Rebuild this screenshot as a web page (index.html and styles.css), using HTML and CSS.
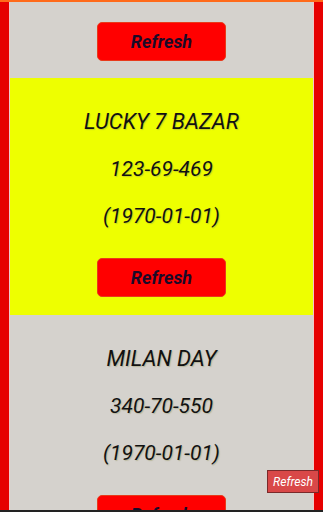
FILE: index.html
```html
<!DOCTYPE html>
<html lang="en">

<head>
    <meta charset="UTF-8">
    <meta name="viewport" content="width=device-width, initial-scale=1.0">
    <title>Results</title>
    <link rel="stylesheet" href="styles.css">
</head>

<body>
    <div class="topline"></div>
    <div class="frame">
        <div class="card grey first">
            <button class="refresh">Refresh</button>
        </div>
        <div class="card yellow">
            <p class="name">LUCKY 7 BAZAR</p>
            <p class="result">123-69-469</p>
            <p class="date">(1970-01-01)</p>
            <button class="refresh">Refresh</button>
        </div>
        <div class="card grey">
            <p class="name">MILAN DAY</p>
            <p class="result">340-70-550</p>
            <p class="date">(1970-01-01)</p>
            <button class="refresh">Refresh</button>
        </div>
    </div>
    <button class="float-refresh">Refresh</button>
    <div class="bottomline"></div>
</body>

</html>
```

FILE: styles.css
```css
html,
body {
    margin: 0;
    padding: 0;
    height: 100%;
    overflow: hidden;
}

body {
    background-color: #e60000;
    font-family: Roboto, "Noto Sans", sans-serif;
    text-align: center;
}

.topline {
    height: 2px;
    background-color: #ff6a1a;
}

.frame {
    margin: 0 9px;
    border-left: 1px solid #f0c8c8;
    border-right: 1px solid #f0c8c8;
    background-color: #d5d2cd;
}

.card {
    padding: 31px 0 18px;
}

.card.first {
    padding: 20px 0 17px;
}

.grey {
    background-color: #d5d2cd;
}

.yellow {
    background-color: #eeff00;
}

.card p {
    margin: 0 0 21px;
    line-height: 26px;
    font-size: 21px;
    font-style: italic;
    color: #111;
    text-shadow: 1px 1px 1px rgba(140, 140, 80, 0.4);
}

.card p.name {
    font-size: 22px;
}

.card p.date {
    margin-bottom: 29px;
}

.refresh {
    display: block;
    margin: 0 auto;
    width: 129px;
    height: 39px;
    background-color: #ff0000;
    border: 1px solid #e83a1a;
    border-radius: 5px;
    color: #1a0a28;
    font-family: Roboto, sans-serif;
    font-size: 18px;
    font-weight: bold;
    font-style: italic;
    padding: 0;
}

.float-refresh {
    position: fixed;
    right: 4px;
    bottom: 19px;
    width: 52px;
    height: 23px;
    padding: 0;
    background-color: #d94848;
    border: 1px solid #7a2a2a;
    color: #fff;
    font-family: Roboto, sans-serif;
    font-size: 12px;
    font-style: italic;
}

.bottomline {
    position: fixed;
    left: 0;
    right: 0;
    bottom: 0;
    height: 2px;
    background-color: #222;
}
```
